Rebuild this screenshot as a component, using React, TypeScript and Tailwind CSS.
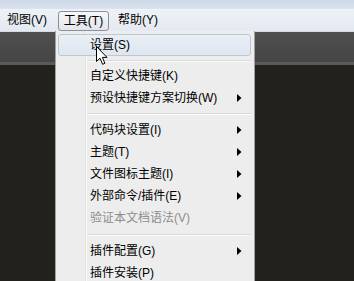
import React from "react";

const font = { fontFamily: '"Liberation Sans", "Noto Sans CJK SC", sans-serif' };

type Item =
  | { kind: "item"; label: string; arrow?: boolean; disabled?: boolean; active?: boolean }
  | { kind: "sep"; h: number };

const items: Item[] = [
  { kind: "item", label: "设置(S)", active: true },
  { kind: "sep", h: 9 },
  { kind: "item", label: "自定义快捷键(K)" },
  { kind: "item", label: "预设快捷键方案切换(W)", arrow: true },
  { kind: "sep", h: 10 },
  { kind: "item", label: "代码块设置(I)", arrow: true },
  { kind: "item", label: "主题(T)", arrow: true },
  { kind: "item", label: "文件图标主题(I)", arrow: true },
  { kind: "item", label: "外部命令/插件(E)", arrow: true },
  { kind: "item", label: "验证本文档语法(V)", disabled: true },
  { kind: "sep", h: 11 },
  { kind: "item", label: "插件配置(G)", arrow: true },
  { kind: "item", label: "插件安装(P)" },
];

function Arrow() {
  return (
    <svg width="5" height="8" viewBox="0 0 5 8" className="absolute left-[181px] top-[7px]">
      <path d="M0 0 L4.5 4 L0 8 Z" fill="#000" />
    </svg>
  );
}

export default function App() {
  return (
    <div className="relative w-[354px] h-[281px] overflow-hidden flex flex-col text-[12px]" style={font}>
      <div className="h-[9px] bg-gradient-to-b from-[#cdd8e7] to-[#dae3ef]" />
      <div className="h-[23px] bg-gradient-to-b from-[#eef2f8] to-[#e4e9f1] flex items-center border-b border-[#d5dbe4]">
        <div className="w-[7px]" />
        <div className="text-black">视图(V)</div>
        <div className="ml-[11px] mt-[1px] h-[20px] w-[51px] flex items-center justify-center rounded-[3px] border border-[#8b9098] bg-gradient-to-b from-[#f6f7f9] to-[#e2e5ea] text-black">
          工具(T)
        </div>
        <div className="ml-[9px] text-black">帮助(Y)</div>
      </div>
      <div className="flex-1 flex flex-col bg-[#22211c]">
        <div className="h-[30px] bg-gradient-to-b from-[#4f4f4f] to-[#454545]" />
        <div className="h-[3px] bg-[#5a5a58]" />
        <div className="flex-1" />
      </div>

      <div className="absolute left-[55px] top-[31px] w-[200px] h-[260px] bg-[#ededed] border-l border-r border-[#a0a0a0] pt-[3px]">
        <div className="absolute left-[29px] top-0 bottom-0 w-[1px] bg-[#e0e0e0]" />
        <div className="absolute left-[30px] top-0 bottom-0 w-[1px] bg-[#fafafa]" />
        {items.map((it, i) =>
          it.kind === "sep" ? (
            <div key={i} className="relative flex items-center pl-[32px] pr-[3px]" style={{ height: it.h }}>
              <div className="flex-1 flex flex-col">
                <div className="h-[1px] bg-[#d8d8d8]" />
                <div className="h-[1px] bg-[#fbfbfb]" />
              </div>
            </div>
          ) : (
            <div key={i} className="relative h-[22px]">
              {it.active && (
                <div className="absolute left-[2px] right-[3px] top-0 bottom-0 rounded-[3px] border border-[#bcc7d5] bg-gradient-to-b from-[#eaeff6] to-[#dfe6ef]" />
              )}
              <div
                className={
                  "relative h-full flex items-center pl-[34px] " +
                  (it.disabled ? "text-[#8e8e8e]" : "text-black")
                }
              >
                {it.label}
              </div>
              {it.arrow && <Arrow />}
            </div>
          )
        )}
      </div>

      <svg width="13" height="20" viewBox="0 0 13 20" className="absolute left-[96px] top-[46px]">
        <path d="M0.5 0.5 L0.5 15.5 L4 12.2 L6.6 18.3 L8.9 17.3 L6.4 11.4 L11 11.4 Z" fill="#fff" stroke="#000" strokeWidth="1" strokeLinejoin="miter" />
      </svg>
    </div>
  );
}
